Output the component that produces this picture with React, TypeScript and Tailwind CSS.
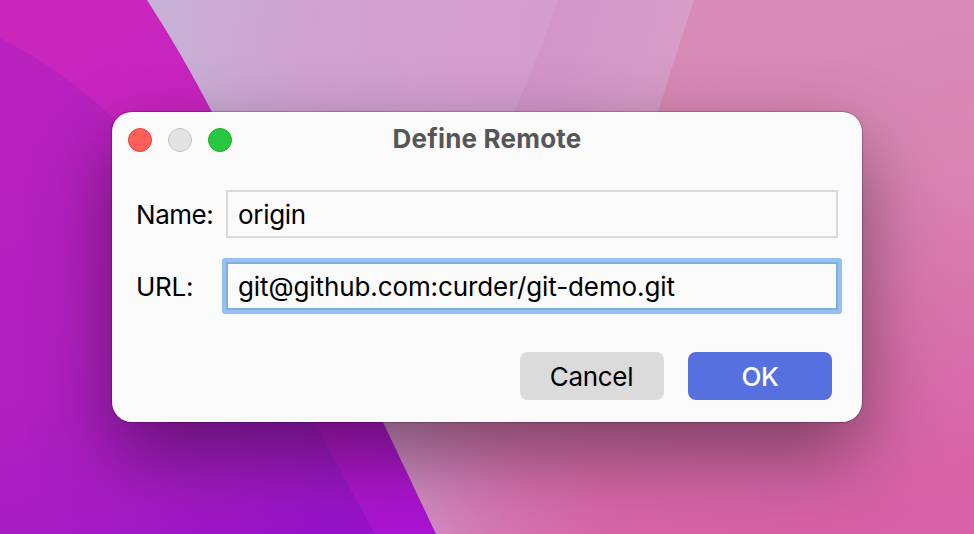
import type { ReactNode } from 'react';

function Wallpaper() {
  return (
    <svg className="absolute inset-0 h-full w-full" viewBox="0 0 974 534" preserveAspectRatio="none" aria-hidden="true">
      <defs>
        <linearGradient id="base" gradientUnits="userSpaceOnUse" x1="180" y1="0" x2="560" y2="50">
          <stop offset="0" stopColor="#c9b0d6" />
          <stop offset="0.35" stopColor="#d0a2d2" />
          <stop offset="1" stopColor="#d59dd0" />
        </linearGradient>
        <linearGradient id="middle" gradientUnits="userSpaceOnUse" x1="530" y1="0" x2="690" y2="40">
          <stop offset="0" stopColor="#d094cb" />
          <stop offset="1" stopColor="#d79dc6" />
        </linearGradient>
        <linearGradient id="rose" gradientUnits="userSpaceOnUse" x1="760" y1="0" x2="880" y2="534">
          <stop offset="0" stopColor="#d88bb8" />
          <stop offset="0.35" stopColor="#d986b2" />
          <stop offset="0.8" stopColor="#d769a7" />
          <stop offset="1" stopColor="#d760a6" />
        </linearGradient>
        <linearGradient id="lowerEdge" gradientUnits="userSpaceOnUse" x1="405" y1="500" x2="620" y2="440">
          <stop offset="0" stopColor="#d08ec4" />
          <stop offset="0.4" stopColor="#d47cb5" stopOpacity="0.7" />
          <stop offset="1" stopColor="#d868a8" stopOpacity="0" />
        </linearGradient>
        <linearGradient id="magenta" gradientUnits="userSpaceOnUse" x1="90" y1="0" x2="390" y2="534">
          <stop offset="0" stopColor="#c927bc" />
          <stop offset="0.3" stopColor="#c822c2" />
          <stop offset="0.75" stopColor="#b619c4" />
          <stop offset="1" stopColor="#a914d2" />
        </linearGradient>
        <linearGradient id="violet" gradientUnits="userSpaceOnUse" x1="20" y1="60" x2="260" y2="560">
          <stop offset="0" stopColor="#b922be" />
          <stop offset="0.55" stopColor="#b120c0" />
          <stop offset="0.82" stopColor="#a41bc4" />
          <stop offset="1" stopColor="#9713ca" />
        </linearGradient>
      </defs>
      <rect width="974" height="534" fill="url(#base)" />
      <path d="M558 0Q538 58 514 112L340 534H974V0Z" fill="url(#middle)" />
      <path d="M694 0Q676 54 658 112L610 250L340 300V534H974V0Z" fill="url(#rose)" />
      <path d="M340 300H680V534H340Z" fill="url(#lowerEdge)" />
      <path d="M0 0H147Q182 54 212 112Q300 260 383 422L436 534H0Z" fill="url(#magenta)" />
      <path d="M0 38Q60 68 113 118Q220 230 314 422L375 534H0Z" fill="url(#violet)" />
    </svg>
  );
}

function Field({ label, focused = false, children }: { label: ReactNode; focused?: boolean; children: ReactNode }) {
  return (
    <div className="flex h-12 items-center">
      <div className="w-[90px] pt-[2px]">{label}</div>
      <div className={focused ? '-m-1 flex-1 rounded-[3px] bg-[#95c1f1] p-1' : 'flex-1'}>
        <div
          className={
            focused
              ? 'flex h-12 items-center border-2 border-[#82acd9] bg-[#fafafa] pt-[2px] pl-[10px]'
              : 'flex h-12 items-center border-2 border-[#dadada] pt-[2px] pl-[10px]'
          }
        >
          {children}
        </div>
      </div>
    </div>
  );
}

export default function App() {
  return (
    <main className="relative flex h-[534px] w-[974px] overflow-hidden pt-28 pl-28 font-['Inter',sans-serif] text-[26px] leading-8 text-black">
      <Wallpaper />
      <section className="relative flex h-[310px] w-[750px] flex-col rounded-[20px] bg-[#fafafa] shadow-[0_0_1px_1px_rgba(0,0,0,0.22),0_32px_80px_rgba(0,0,0,0.43)]">
        <header className="grid h-[54px] grid-cols-[1fr_auto_1fr] items-center px-4">
          <div className="flex gap-4 pt-[2px]">
            <span className="size-6 rounded-full border border-[#e2453f] bg-[#ff5f57]" />
            <span className="size-6 rounded-full border border-[#c5c5c5] bg-[#e2e2e2]" />
            <span className="size-6 rounded-full border border-[#1fab2c] bg-[#28c840]" />
          </div>
          <h1 className="font-bold tracking-[0.2px] text-[#565656]">Define Remote</h1>
        </header>
        <div className="flex flex-col gap-6 px-6 pt-6">
          <Field label={<span className="tracking-[-0.45px]">Name:</span>}>
            <span className="tracking-[-0.3px]">origin</span>
          </Field>
          <Field label={<span className="tracking-[-0.25px]">URL:</span>} focused>
            <span className="tracking-[-0.1px]">git@github.com:curder/git-demo.git</span>
          </Field>
        </div>
        <footer className="mt-auto flex justify-end gap-6 pr-[30px] pb-[22px]">
          <button className="h-12 w-36 rounded-lg bg-[#dbdbdb] pt-[2px] pr-[1px] tracking-[-0.3px]">Cancel</button>
          <button className="h-12 w-36 rounded-lg bg-[#5670df] pt-[2px] font-medium tracking-[-0.5px] text-white">OK</button>
        </footer>
      </section>
    </main>
  );
}
